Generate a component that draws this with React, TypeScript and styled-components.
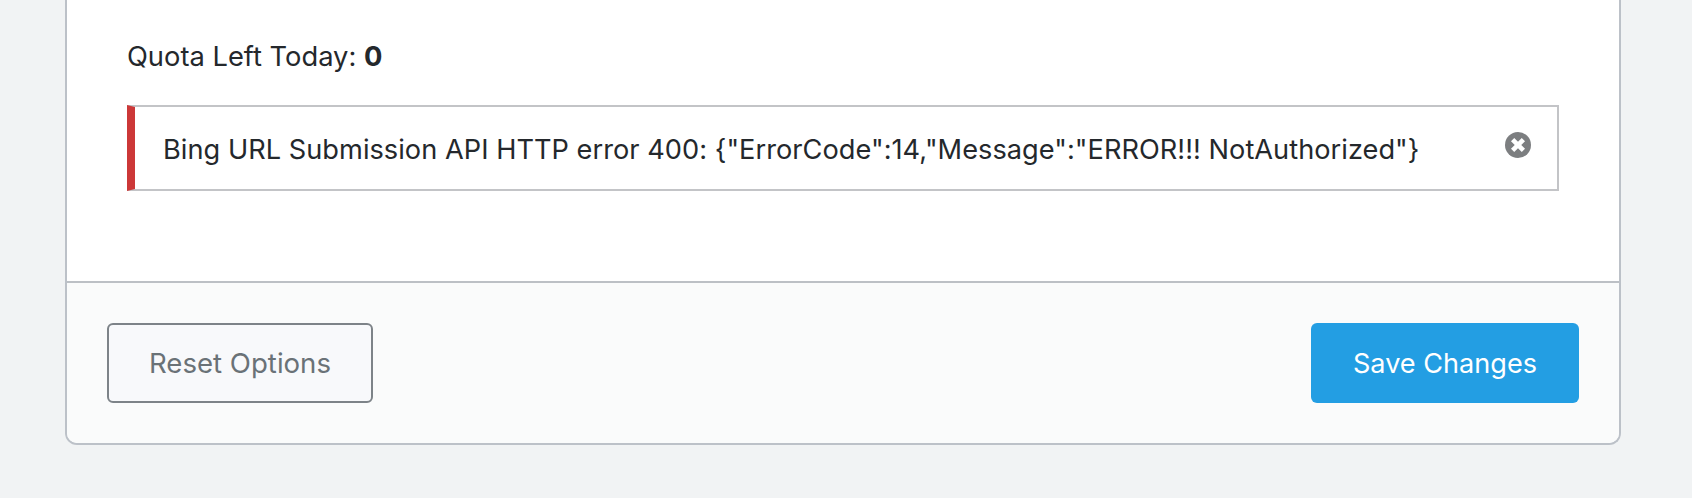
import React from 'react'
import styled, { createGlobalStyle } from 'styled-components'

const Global = createGlobalStyle`
  html, body {
    margin: 0;
    padding: 0;
    height: 498px;
    overflow: hidden;
    background: #f1f3f4;
    font-family: Inter, "Liberation Sans", sans-serif;
    -webkit-font-smoothing: antialiased;
  }
`

const Page = styled.div`
  padding: 0 71px 0 65px;
`

const Panel = styled.div`
  height: 445px;
  box-sizing: border-box;
  display: flex;
  flex-direction: column;
  background: #fff;
  border: 2px solid #bcc1c8;
  border-top: 0;
  border-radius: 0 0 12px 12px;
  overflow: hidden;
`

const Body = styled.div`
  height: 281px;
  box-sizing: border-box;
  padding: 41px 60px 0 60px;
`

const Quota = styled.p`
  margin: 0 0 32px;
  font-size: 27.3px;
  line-height: 32px;
  color: #24282c;
`

const Notice = styled.div`
  height: 86px;
  box-sizing: border-box;
  display: flex;
  justify-content: space-between;
  padding: 0 26px 0 28px;
  background: #fff;
  border: 2px solid #c3c4c7;
  border-left: 8px solid #cc3838;
`

const Message = styled.span`
  margin-top: 27px;
  font-size: 27.2px;
  letter-spacing: 0.03px;
  line-height: 32px;
  color: #24282c;
`

const Dismiss = styled.button`
  width: 26px;
  height: 26px;
  margin-top: 25px;
  padding: 0;
  border: 0;
  background: none;
`

const Footer = styled.div`
  flex: 1;
  display: flex;
  justify-content: space-between;
  padding: 40px 40px 0;
  background: #fafbfb;
  border-top: 2px solid #bcc0c5;
`

const Button = styled.button<{ $primary?: boolean }>`
  height: 80px;
  box-sizing: border-box;
  border-radius: 6px;
  font-family: inherit;
  font-size: ${(p) => (p.$primary ? '27.1px' : '27.6px')};
  border: ${(p) => (p.$primary ? '0' : '2px solid #7d8388')};
  background: ${(p) => (p.$primary ? '#239ee3' : '#f8f9fb')};
  color: ${(p) => (p.$primary ? '#fff' : '#6a7277')};
  width: ${(p) => (p.$primary ? '268px' : '266px')};
`

const App = (): JSX.Element => {
  return (
    <>
      <Global />
      <Page>
        <Panel>
          <Body>
            <Quota>
              Quota Left Today: <b>0</b>
            </Quota>
            <Notice>
              <Message>
                Bing URL Submission API HTTP error 400: {'{"ErrorCode":14,"Message":"ERROR!!! NotAuthorized"}'}
              </Message>
              <Dismiss aria-label="Dismiss">
                <svg width="26" height="26" viewBox="0 0 26 26">
                  <circle cx="13" cy="13" r="13" fill="#7c7e80" />
                  <path d="M7.6 7.6l10.8 10.8M18.4 7.6L7.6 18.4" stroke="#fff" strokeWidth="4.6" />
                </svg>
              </Dismiss>
            </Notice>
          </Body>
          <Footer>
            <Button>Reset Options</Button>
            <Button $primary>Save Changes</Button>
          </Footer>
        </Panel>
      </Page>
    </>
  )
}

export default App
